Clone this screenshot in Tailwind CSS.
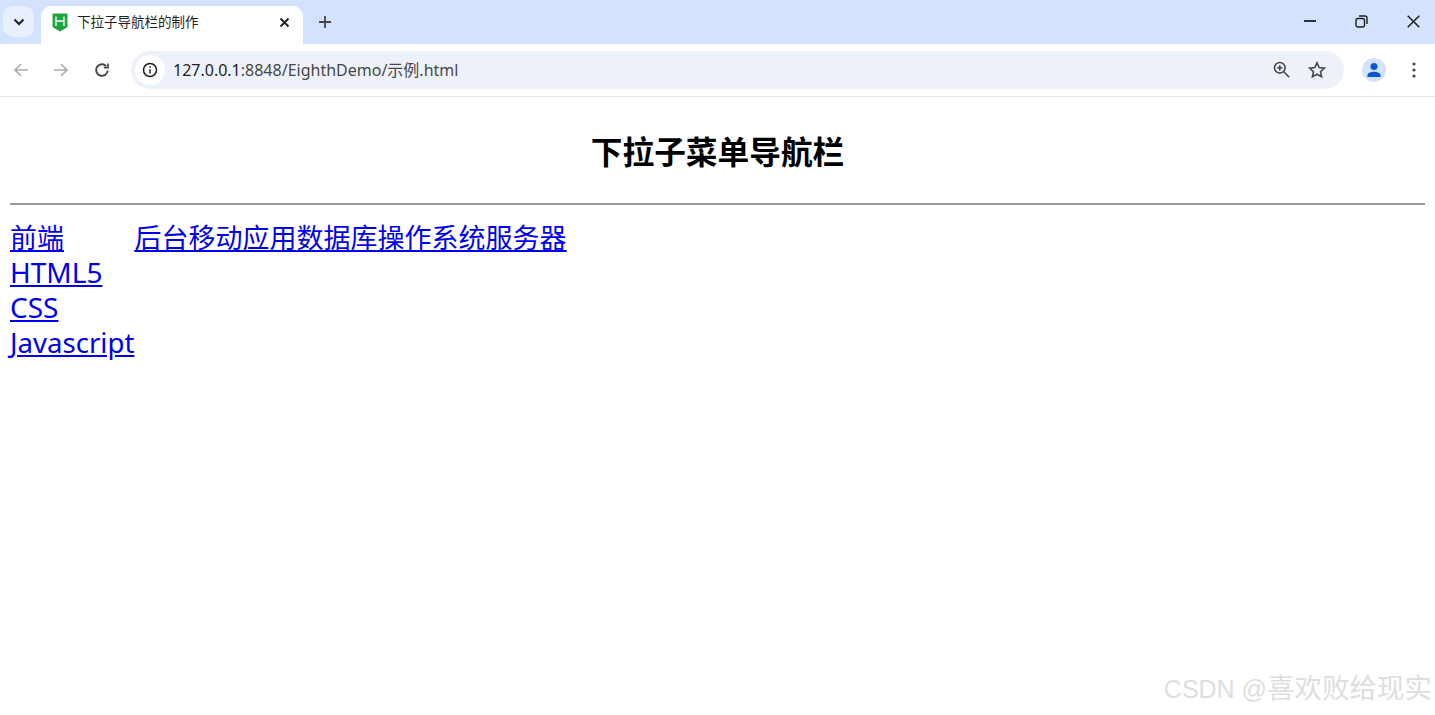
<!DOCTYPE html>
<html lang="zh-CN">
<head>
    <meta charset="UTF-8">
    <meta name="viewport" content="width=device-width, initial-scale=1.0">
    <title>下拉子导航栏的制作</title>
    <script src="https://cdn.jsdelivr.net/npm/@tailwindcss/browser@4"></script>
</head>
<body class="relative h-[715px] overflow-hidden bg-white font-['Noto_Sans','Noto_Sans_CJK_SC',sans-serif]">
    <!-- tab strip -->
    <div class="flex h-[44px] bg-[#d3e3fd]">
        <div class="ml-[3px] mt-[6px] flex h-[31px] w-[31px] items-center justify-center rounded-[10px] bg-[#e8f0fe]">
            <svg width="12" height="8" viewBox="0 0 12 8" fill="none" stroke="#1f1f1f" stroke-width="2"><path d="M1.500 1.500 6 6l4.500-4.500"/></svg>
        </div>
        <div class="relative ml-[7px] mt-[6px] flex h-[38px] w-[262px] items-center rounded-t-[11px] bg-white pb-[6px]">
            <svg class="ml-[11px]" width="16" height="19" viewBox="0 0 16 19"><path d="M0.500 0.500h15v13.500l-7.500 4.500-7.500-4.500z" fill="#1fa53c"/><path d="M4 3.500v9.500M12 3.500v9.500M4 8h8" stroke="#fff" stroke-width="1.300" fill="none"/></svg>
            <span class="ml-[9px] text-[13.500px] leading-[18px] text-[#1f1f1f]">下拉子导航栏的制作</span>
            <svg class="absolute left-[238px] top-[11px]" width="11" height="11" viewBox="0 0 11 11" stroke="#1f1f1f" stroke-width="1.800"><path d="M1.500 1.500l8 8M9.500 1.500l-8 8"/></svg>
        </div>
        <svg class="ml-[16px] mt-[16px]" width="12" height="12" viewBox="0 0 12 12" stroke="#444746" stroke-width="1.800"><path d="M6 0v12M0 6h12"/></svg>
        <div class="ml-auto flex">
            <svg class="mr-[39px] mt-[20px]" width="12" height="2" viewBox="0 0 12 2"><path d="M0 1h12" stroke="#1f1f1f" stroke-width="1.800"/></svg>
            <svg class="mr-[39px] mt-[15px]" width="13" height="13" viewBox="0 0 13 13" fill="none" stroke="#1f1f1f" stroke-width="1.400"><rect x="1" y="3.500" width="8.500" height="8.500" rx="2"/><path d="M4 1h6a2 2 0 0 1 2 2v6"/></svg>
            <svg class="mr-[15px] mt-[15px]" width="13" height="13" viewBox="0 0 13 13" stroke="#1f1f1f" stroke-width="1.500"><path d="M0.700 0.700l11.600 11.600M12.300 0.700 0.700 12.300"/></svg>
        </div>
    </div>
    <!-- toolbar -->
    <div class="flex h-[53px] items-center border-b border-[#e3e3e3] bg-white pb-[1px]">
        <svg class="ml-[13px]" width="16" height="16" viewBox="0 0 16 16" fill="none" stroke="#a9abad" stroke-width="1.600"><path d="M15 8H2M8 2 2 8l6 6"/></svg>
        <svg class="ml-[24px]" width="16" height="16" viewBox="0 0 16 16" fill="none" stroke="#a9abad" stroke-width="1.600"><path d="M1 8h13M8 2l6 6-6 6"/></svg>
        <svg class="ml-[25px]" width="16" height="16" viewBox="0 0 16 16" fill="none" stroke="#444746" stroke-width="1.900"><path d="M13.700 8.500a5.800 5.800 0 1 1-1.500-4.400"/><path d="M14 1.500v4.200H9.800" stroke-width="1.700"/></svg>
        <div class="ml-[21px] flex h-[38px] w-[1213px] items-center rounded-full bg-[#edf2fa]">
            <div class="ml-[4px] flex h-[30px] w-[30px] items-center justify-center rounded-full bg-white">
                <svg width="16" height="16" viewBox="0 0 16 16" fill="none" stroke="#1f1f1f" stroke-width="1.500"><circle cx="8" cy="8" r="6.500"/><path d="M8 7.200v4.300M8 4.200v1.600"/></svg>
            </div>
            <span class="ml-[8px] text-[16px] leading-[20px] text-[#1f1f1f]">127.0.0.1<span class="text-[#474747]">:8848/EighthDemo/示例.html</span></span>
            <div class="ml-auto mr-[18px] flex items-center gap-[19px]">
                <svg class="translate-x-[1px]" width="17" height="17" viewBox="0 0 17 17" fill="none" stroke="#444746" stroke-width="1.600"><circle cx="6.800" cy="6.800" r="5.300"/><path d="M10.800 10.800l5.400 5.400M4.200 6.800h5.200M6.800 4.200v5.200"/></svg>
                <svg width="18" height="18" viewBox="0 0 18 18" fill="none" stroke="#444746" stroke-width="1.600"><path d="M9 1.800l2.200 4.800 5.200.6-3.900 3.500 1.100 5.100L9 13.200l-4.600 2.600 1.100-5.100L1.600 7.200l5.200-.6z"/></svg>
            </div>
        </div>
        <div class="ml-[18px] flex h-[24px] w-[24px] items-center justify-center rounded-full bg-[#d3e3fd]">
            <svg width="16" height="16" viewBox="0 0 16 16" fill="#0b57d0"><circle cx="8" cy="4.500" r="3.500"/><path d="M1.500 15v-1.800c0-2.200 3.500-3.400 6.500-3.400s6.500 1.200 6.500 3.400V15z"/></svg>
        </div>
        <svg class="ml-[26px]" width="4" height="16" viewBox="0 0 4 16" fill="#444746"><circle cx="2" cy="2" r="1.600"/><circle cx="2" cy="8" r="1.600"/><circle cx="2" cy="14" r="1.600"/></svg>
    </div>
    <!-- page -->
    <div class="px-[10px]">
        <h1 class="flex h-[106px] items-center justify-center pt-[3px] text-[31.700px] font-bold leading-[40px] text-black">下拉子菜单导航栏</h1>
        <div class="h-[2px] bg-[#9a9a9a]"></div>
        <nav class="mt-[15px] flex text-[27px] leading-[35px] text-[#0000ee] underline">
            <div class="flex w-[124.500px] flex-col">
                <a href="#">前端</a>
                <a href="#" class="text-[28px]">HTML5</a>
                <a href="#" class="text-[28px]">CSS</a>
                <a href="#" class="text-[27.600px]">Javascript</a>
            </div>
            <a href="#">后台</a>
            <a href="#">移动应用</a>
            <a href="#">数据库</a>
            <a href="#">操作系统</a>
            <a href="#">服务器</a>
        </nav>
    </div>
    <div class="absolute right-[3px] top-[671px] font-['Liberation_Sans','Noto_Sans_CJK_SC',sans-serif] text-[27.500px] leading-[36px] text-[#dedede]"><span class="text-[25px]">CSDN @</span>喜欢败给现实</div>
</body>
</html>
